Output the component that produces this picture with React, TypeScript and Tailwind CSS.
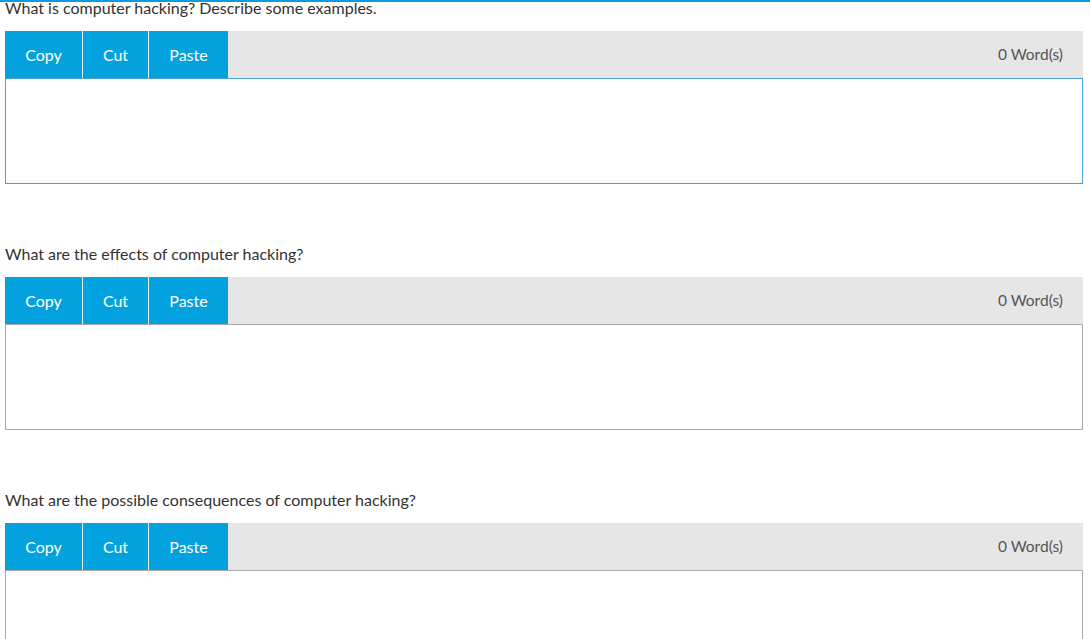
import React from "react";

const questions = [
  "What is computer hacking? Describe some examples.",
  "What are the effects of computer hacking?",
  "What are the possible consequences of computer hacking?",
];

const Question = ({ text, focused, first }: { text: string; focused?: boolean; first?: boolean }) => {
  return (
    <div className={first ? "-mt-[6px]" : "mt-[58px]"}>
      <p className="relative text-[16px] leading-[24px] text-[#333333]">{text}</p>
      <div className="mt-[11px] flex h-[47px] items-stretch bg-[#e6e6e6]">
        <button className="w-[78px] border-r border-[#e8f4fb] bg-[#03a2de] pt-[1px] text-[16px] text-white">Copy</button>
        <button className="w-[66px] border-r border-[#e8f4fb] bg-[#03a2de] pt-[1px] text-[16px] text-white">Cut</button>
        <button className="w-[79px] bg-[#03a2de] pt-[1px] text-[16px] text-white">Paste</button>
        <div className="flex-1" />
        <span className="flex items-center pr-[20px] text-[15.5px] text-[#555555]">0 Word(s)</span>
      </div>
      <textarea
        className={
          "block h-[106px] w-full resize-none border bg-white outline-none " +
          (focused ? "border-[#4a9fd3]" : "border-[#a9a9a9]")
        }
      />
    </div>
  );
};

export default function App() {
  return (
    <div
      className="h-[639px] overflow-hidden border-t-2 border-[#0d9be0] bg-white pl-[5px] pr-[7px]"
      style={{ fontFamily: "Lato, 'Open Sans', sans-serif" }}
    >
      {questions.map((q, i) => (
        <Question key={q} text={q} focused={i === 0} first={i === 0} />
      ))}
    </div>
  );
}
